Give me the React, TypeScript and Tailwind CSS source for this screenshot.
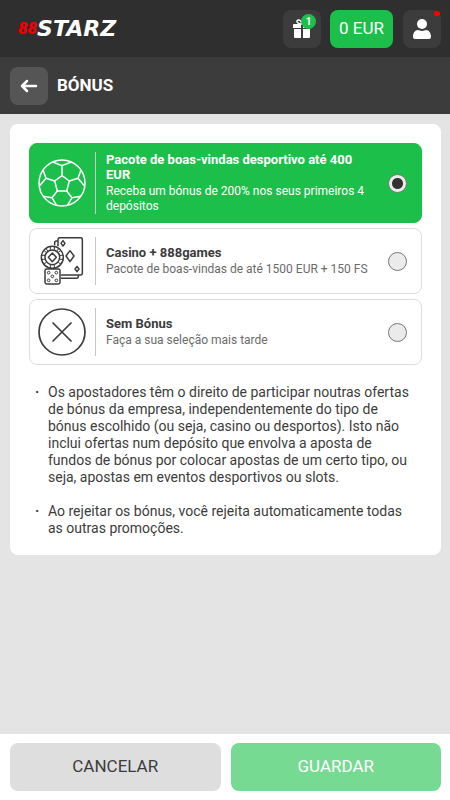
import React, { useState } from 'react'

const BallIcon = () => (
  <svg className="size-12 shrink-0" viewBox="53 70 144 144" fill="none" stroke="currentColor" strokeWidth="4.500" strokeLinejoin="round" aria-hidden="true">
    <circle cx="125" cy="142" r="69" />
    <path d="M125 120l22 16-8 30h-28l-8-30z" />
    <path d="M125 120V90M147 136l26-8M139 166l16 20M111 166l-16 20M103 136l-26-8" />
    <path d="M97 79l28 11 28-11M182 103l-9 25 19 22M182 182l-27 4-14 24M109 210l-14-24-27-4M58 150l19-22-9-25" />
  </svg>
)

const CasinoIcon = () => (
  <svg className="size-12 shrink-0" viewBox="53 36 144 144" fill="none" stroke="currentColor" strokeWidth="4.500" strokeLinejoin="round" aria-hidden="true">
    <path d="M113 64V44q0-6 6-6h61q6 0 6 6v100q0 6-6 6h-58" />
    <path d="M113 48h-5q-5 0-5 6v7M174 151v3q0 6-6 6h-46" />
    <path d="M149 77l12 16-12 17-12-17z" />
    <path d="M128 47l6 8-6 8-6-8zM170 124l6 8-6 8-6-8z" />
    <circle cx="96" cy="97" r="33" />
    <circle cx="96" cy="97" r="22" />
    <path d="M96 84l12 13-12 13-12-13z" />
    <path d="M90 65v10M102 65v10M90 119v10M102 119v10M64 91h10M64 103h10M118 91h10M118 103h10M70 76l8 6M76 70l7 8M122 76l-8 6M116 70l-7 8M70 118l8-6M122 118l-8-6" strokeWidth="3" />
    <rect x="74" y="132" width="45" height="45" rx="5" className="fill-white" />
    <g strokeWidth="3">
      <circle cx="85" cy="143" r="4" />
      <circle cx="108" cy="143" r="4" />
      <circle cx="96" cy="154" r="4" />
      <circle cx="85" cy="166" r="4" />
      <circle cx="108" cy="166" r="4" />
    </g>
  </svg>
)

const NoBonusIcon = () => (
  <svg className="size-12 shrink-0" viewBox="0 0 48 48" fill="none" stroke="currentColor" strokeWidth="1.700" strokeLinecap="round" aria-hidden="true">
    <circle cx="24" cy="24" r="23" />
    <path d="M15 15l18 18M33 15L15 33" />
  </svg>
)

const options = [
  {
    id: 'sport',
    title: 'Pacote de boas-vindas desportivo até 400 EUR',
    text: 'Receba um bónus de 200% nos seus primeiros 4 depósitos',
    Icon: BallIcon,
  },
  {
    id: 'casino',
    title: 'Casino + 888games',
    text: 'Pacote de boas-vindas de até 1500 EUR + 150 FS',
    Icon: CasinoIcon,
  },
  {
    id: 'none',
    title: 'Sem Bónus',
    text: 'Faça a sua seleção mais tarde',
    Icon: NoBonusIcon,
  },
]

const notes = [
  'Os apostadores têm o direito de participar noutras ofertas de bónus da empresa, independentemente do tipo de bónus escolhido (ou seja, casino ou desportos). Isto não inclui ofertas num depósito que envolva a aposta de fundos de bónus por colocar apostas de um certo tipo, ou seja, apostas em eventos desportivos ou slots.',
  'Ao rejeitar os bónus, você rejeita automaticamente todas as outras promoções.',
]

function Header() {
  return (
    <header className="flex h-[57px] items-center justify-between bg-[#2f2f2f] pr-[9px] pl-[18px]">
      <a href="#" className="flex items-center leading-none font-bold italic">
        <span className="text-[17px] font-black text-[#f00000]">88</span>
        <span className="font-['DejaVu_Sans'] text-[22px] text-white">STARZ</span>
      </a>
      <div className="flex items-center">
        <button className="relative flex size-[38px] items-center justify-center rounded-lg bg-[#3c3c3c] text-white">
          <svg className="size-5" viewBox="0 0 20 20" fill="currentColor" aria-hidden="true">
            <path d="M2 5h7v4H1V6q0-1 1-1zM11 5h7q1 0 1 1v3h-8zM2 10h7v9H3q-1 0-1-1zM11 10h7v8q0 1-1 1h-6z" />
            <path d="M10 5C4 5 4 1 6.500 1 9 1 10 5 10 5s1-4 3.500-4S16 5 10 5z" fill="none" stroke="currentColor" strokeWidth="1.500" />
          </svg>
          <span className="absolute top-1 right-[5px] flex size-[15px] items-center justify-center rounded-full bg-[#1cbf4a] text-[10px] font-bold">1</span>
        </button>
        <button className="ml-[9px] h-[38px] rounded-lg bg-[#1cbf4a] px-[9px] text-[17px] text-white">0 EUR</button>
        <button className="relative ml-[10px] flex size-[38px] items-center justify-center rounded-lg bg-[#3c3c3c] text-white" aria-label="Perfil">
          <svg className="size-5" viewBox="0 0 20 20" fill="currentColor" aria-hidden="true">
            <circle cx="10" cy="5" r="5" />
            <path d="M1 18c0-4 2-7 5-7 1 0 2 1 4 1s3-1 4-1c3 0 5 3 5 7q0 2-2 2H3q-2 0-2-2z" />
          </svg>
          <span className="absolute top-px right-px h-[5px] w-[6px] rounded-sm bg-[#f00]" />
        </button>
      </div>
    </header>
  )
}

export default function App() {
  const [selected, setSelected] = useState('sport')

  return (
    <div className="flex min-h-screen flex-col bg-[#e4e4e4] font-['Roboto',sans-serif] text-[#3c3c3c]">
      <Header />

      <div className="flex h-[57px] items-center gap-[9px] bg-[#3c3c3c] px-[10px] text-white">
        <button className="flex size-[38px] items-center justify-center rounded-lg bg-[#555]" aria-label="Voltar">
          <svg className="size-[18px]" viewBox="0 0 18 18" fill="none" stroke="currentColor" strokeWidth="2.500" strokeLinecap="round" strokeLinejoin="round" aria-hidden="true">
            <path d="M16 9H2M7 4L2 9l5 5" />
          </svg>
        </button>
        <h1 className="text-[17px] font-bold">BÓNUS</h1>
      </div>

      <main className="flex-1 py-[10px] pr-[9px] pl-[10px]">
        <div className="rounded-lg bg-white px-[19px] pt-[19px] pb-[18px]">
          <div className="flex flex-col gap-[5px]" role="radiogroup" aria-label="Bónus">
            {options.map(({ id, title, text, Icon }) => (
              <label
                key={id}
                htmlFor={id}
                className="flex cursor-pointer items-center rounded-lg border border-[#dedede] p-2 pr-[14px] has-checked:border-[#1cbf4a] has-checked:bg-[#1cbf4a] has-checked:text-white"
              >
                <Icon />
                <span className="ml-[9px] w-px shrink-0 self-stretch bg-[#c8c8c8]" />
                <span className="mr-4 ml-[10px] flex flex-1 flex-col gap-[2px]">
                  <span className="text-[13px] leading-[15px] font-bold">{title}</span>
                  <span className={selected === id ? 'text-[12px] leading-[15px]' : 'text-[12px] leading-[15px] text-[#6b6b6b]'}>{text}</span>
                </span>
                <input
                  id={id}
                  type="radio"
                  name="bonus"
                  checked={selected === id}
                  onChange={() => setSelected(id)}
                  className="size-[19px] shrink-0 appearance-none rounded-full border border-[#777] bg-[#ebebeb] checked:bg-[radial-gradient(circle,#333_5px,#ebebeb_6px)]"
                />
              </label>
            ))}
          </div>

          <ul className="mt-[19px] flex flex-col gap-[17px] pr-2 text-[14px] leading-[17px]">
            {notes.map((note, i) => (
              <li key={i} className="flex pl-[6px]">
                <span className="w-[13px] shrink-0 font-bold" aria-hidden="true">·</span>
                <span>{note}</span>
              </li>
            ))}
          </ul>
        </div>
      </main>

      <footer className="grid grid-cols-2 gap-[10px] bg-white py-[9px] pr-[9px] pl-[10px] text-[17px]">
        <button className="h-12 rounded-lg bg-[#dedede]">CANCELAR</button>
        <button className="h-12 rounded-lg bg-[#77da92] text-white">GUARDAR</button>
      </footer>
    </div>
  )
}
